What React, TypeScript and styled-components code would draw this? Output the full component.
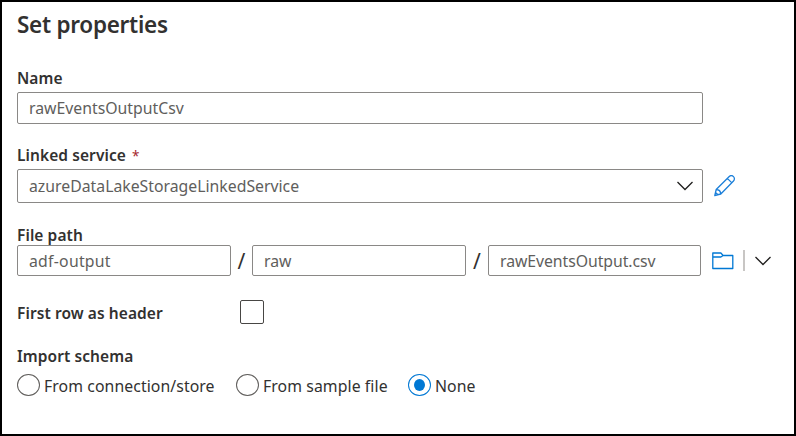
import React, { useState } from 'react';
import styled, { createGlobalStyle } from 'styled-components';

const GlobalStyle = createGlobalStyle`
  * { box-sizing: border-box; }
  body {
    margin: 0;
    background: #fff;
    font-family: "Noto Sans", "Open Sans", sans-serif;
  }
`;

const Panel = styled.main`
  width: 796px;
  height: 436px;
  padding: 9px 0 0 15px;
  border: 2px solid #000;
  display: flex;
  flex-direction: column;
  overflow: hidden;
  color: #323130;
  background: #fff;
`;

const Title = styled.h1`
  margin: 0;
  height: 30px;
  font-size: 22.5px;
  line-height: 28px;
  font-weight: 600;
  letter-spacing: -0.27px;
  white-space: nowrap;
`;

const Field = styled.section<{ $gap: number; $labelHeight: number }>`
  margin-top: ${({ $gap }) => $gap}px;
  display: grid;
  grid-template-rows: ${({ $labelHeight }) => $labelHeight}px auto;
`;

const Label = styled.span`
  font-size: 15.5px;
  line-height: 22px;
  font-weight: 600;
  letter-spacing: 0.08px;
  white-space: nowrap;
`;

const Required = styled.span`
  margin-left: 6px;
  color: #a4262c;
  font-size: 13.5px;
  font-weight: 400;
`;

const Row = styled.div`
  display: flex;
  align-items: center;
`;

const Box = styled.div<{ $width: number; $height: number }>`
  width: ${({ $width }) => $width}px;
  height: ${({ $height }) => $height}px;
  flex: none;
  display: flex;
  align-items: center;
  justify-content: space-between;
  padding: 0 9px 0 11px;
  border: 1px solid #8a8886;
  border-radius: 2px;
`;

const Value = styled.span<{ $tracking?: number }>`
  color: #605e5c;
  font-size: 15.8px;
  line-height: 22px;
  letter-spacing: ${({ $tracking = 0 }) => $tracking}px;
  white-space: nowrap;
`;

const Slash = styled.span<{ $width: number }>`
  width: ${({ $width }) => $width}px;
  text-align: center;
  font-size: 21px;
  line-height: 26px;
`;

const IconSlot = styled.span<{ $left: number }>`
  display: flex;
  margin-left: ${({ $left }) => $left}px;
`;

const Divider = styled.span`
  width: 2px;
  height: 21px;
  margin: 0 10px 0 9px;
  background: #c8c6c4;
`;

const HeaderRow = styled.div`
  margin-top: 24px;
  height: 24px;
  display: grid;
  grid-template-columns: 223px 24px;
  align-items: center;

  ${Label} {
    padding-top: 2px;
  }
`;

const Checkbox = styled.span`
  width: 24px;
  height: 24px;
  border: 1px solid #484644;
  border-radius: 2px;
`;

const Choices = styled.div`
  display: grid;
  grid-template-columns: 219px 172px auto;
`;

const Choice = styled.div`
  display: flex;
  align-items: center;
  gap: 4px;
  height: 22px;
  cursor: pointer;
`;

const Radio = styled.span<{ $on: boolean }>`
  width: 23px;
  height: 22px;
  flex: none;
  display: grid;
  place-items: center;
  border: 1px solid ${({ $on }) => ($on ? '#0078d4' : '#605e5c')};
  border-radius: 50%;
  &::after {
    content: '';
    width: 11px;
    height: 12px;
    border-radius: 50%;
    background: ${({ $on }) => ($on ? '#0078d4' : 'transparent')};
  }
`;

const ChoiceText = styled(Value)`
  padding-top: 2px;
  color: #323130;
  letter-spacing: 0.08px;
`;

const Chevron = () => (
  <svg width="16" height="10" viewBox="0 0 16 10" fill="none" stroke="#201f1e" strokeWidth="1.3">
    <path d="M.5 1 8 8.5 15.5 1" />
  </svg>
);

const Pencil = () => (
  <svg width="22" height="22" viewBox="0 0 22 22" fill="none" stroke="#1b7fd9" strokeWidth="1.3" strokeLinejoin="round">
    <path d="M.8 20.5 2.2 14.5 15 1.7c1.3-1.3 3.3-1.3 4.5-.1s1.2 3.2 0 4.4L6.8 19 .8 20.5ZM13.3 3.4l4.6 4.5M2.2 14.5c2.6.1 4.4 1.8 4.6 4.5M1.5 17.5l2.5 2.3" />
  </svg>
);

const Folder = () => (
  <svg width="22" height="18" viewBox="0 0 22 18" fill="none" stroke="#0078d4" strokeWidth="1.3" strokeLinejoin="round">
    <path d="M.8 1h8.1l2.2 2.5h9.7v13H.8V1ZM.8 5h8.1l2.2-1.5" />
  </svg>
);

const options = ['From connection/store', 'From sample file', 'None'];

export default function App() {
  const [schema, setSchema] = useState('None');
  return (
    <>
      <GlobalStyle />
      <Panel>
        <Title>Set properties</Title>
        <Field $gap={26} $labelHeight={25}>
          <Label>Name</Label>
          <Box $width={686} $height={32}>
            <Value>rawEventsOutputCsv</Value>
          </Box>
        </Field>
        <Field $gap={20} $labelHeight={25}>
          <Label>
            Linked service<Required>*</Required>
          </Label>
          <Row>
            <Box $width={686} $height={34}>
              <Value>azureDataLakeStorageLinkedService</Value>
              <Chevron />
            </Box>
            <IconSlot $left={11}>
              <Pencil />
            </IconSlot>
          </Row>
        </Field>
        <Field $gap={21} $labelHeight={21}>
          <Label>File path</Label>
          <Row>
            <Box $width={214} $height={31}>
              <Value $tracking={0.25}>adf-output</Value>
            </Box>
            <Slash $width={21}>/</Slash>
            <Box $width={214} $height={31}>
              <Value>raw</Value>
            </Box>
            <Slash $width={22}>/</Slash>
            <Box $width={213} $height={31}>
              <Value $tracking={-0.06}>rawEventsOutput.csv</Value>
            </Box>
            <IconSlot $left={11}>
              <Folder />
            </IconSlot>
            <Divider />
            <Chevron />
          </Row>
        </Field>
        <HeaderRow>
          <Label>First row as header</Label>
          <Checkbox />
        </HeaderRow>
        <Field $gap={21} $labelHeight={29}>
          <Label>Import schema</Label>
          <Choices>
            {options.map((name) => (
              <Choice key={name} onClick={() => setSchema(name)}>
                <Radio $on={schema === name} />
                <ChoiceText>{name}</ChoiceText>
              </Choice>
            ))}
          </Choices>
        </Field>
      </Panel>
    </>
  );
}
